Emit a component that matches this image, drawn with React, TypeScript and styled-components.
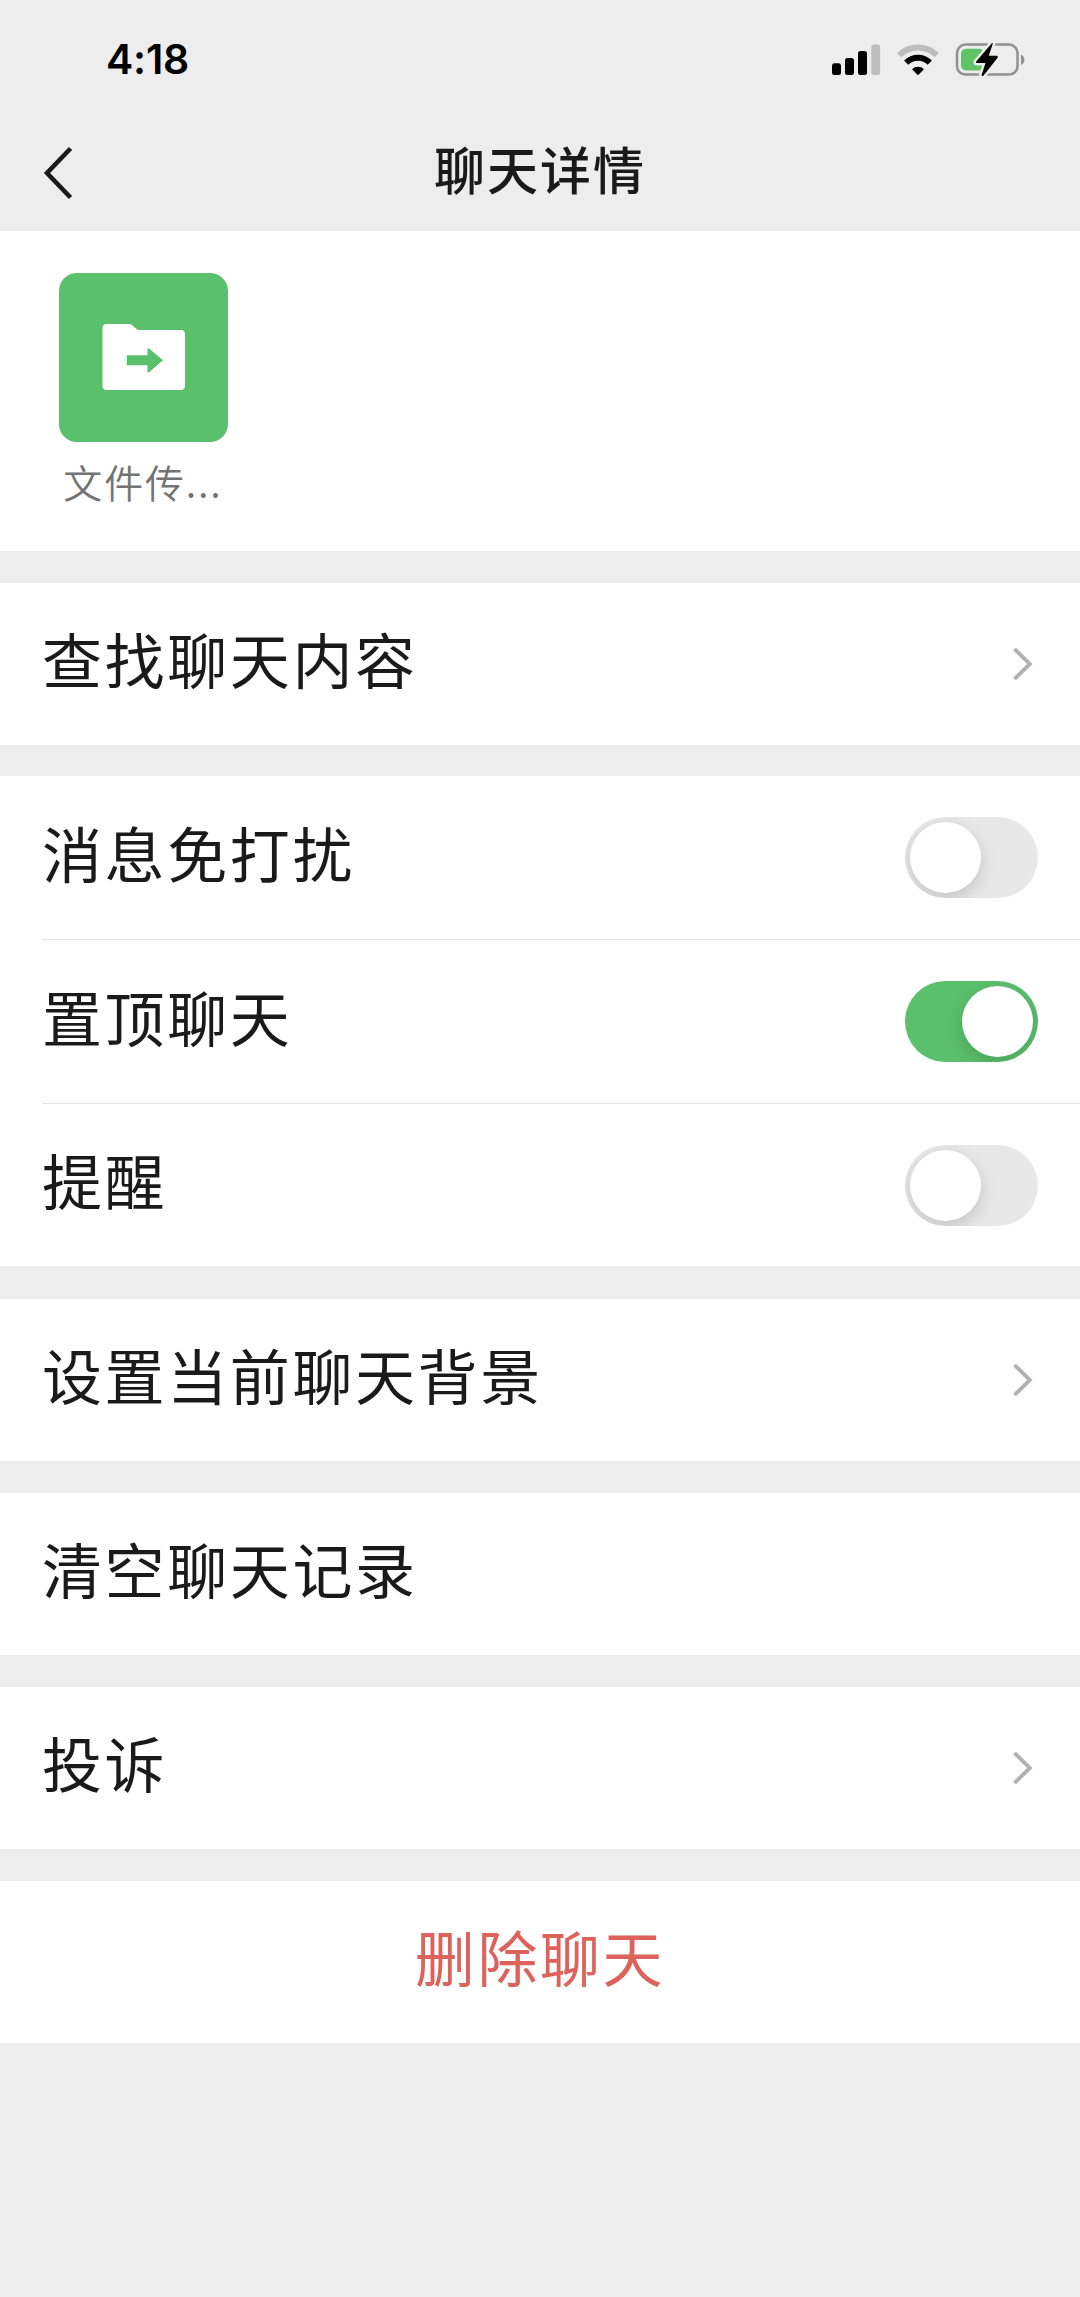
import React from "react";
import styled, { createGlobalStyle } from "styled-components";

const GlobalStyle = createGlobalStyle`
  * { box-sizing: border-box; }
  body {
    margin: 0;
    background: #ededed;
    font-family: "Liberation Sans", "Noto Sans CJK SC", sans-serif;
    color: #1a1a1a;
  }
`;

const Screen = styled.main`
  display: flex;
  flex-direction: column;
  width: 1080px;
  height: 2297px;
  background: #ededed;
  overflow: hidden;
`;

const StatusBar = styled.div`
  display: flex;
  justify-content: space-between;
  align-items: center;
  height: 118px;
  padding: 0 55px 0 106px;
`;

const Time = styled.span`
  font-family: Inter, sans-serif;
  font-size: 41px;
  font-weight: 600;
  letter-spacing: -0.2px;
  color: #000;
`;

const StatusIcons = styled.div`
  display: flex;
  align-items: center;
  gap: 16px;
`;

const NavBar = styled.header`
  display: grid;
  grid-template-columns: 120px 1fr 120px;
  align-items: center;
  height: 113px;
`;

const BackButton = styled.button`
  display: flex;
  padding: 0 0 3px 42px;
  border: 0;
  background: none;
`;

const Title = styled.h1`
  margin: 0;
  padding-bottom: 4px;
  text-align: center;
  font-size: 51px;
  line-height: 70px;
  font-weight: 500;
  letter-spacing: 2px;
`;

const Members = styled.section`
  display: flex;
  height: 320px;
  padding: 42px 58px;
  background: #fff;
`;

const Member = styled.div`
  display: flex;
  flex-direction: column;
  align-items: center;
  width: 170px;
`;

const Avatar = styled.div`
  display: flex;
  width: 169px;
  height: 169px;
  border-radius: 18px;
  background: #5ac06c;
`;

const MemberName = styled.span`
  margin-top: 10px;
  font-size: 39px;
  line-height: 58px;
  letter-spacing: 1.8px;
  color: #737373;
  font-family: "Noto Sans CJK SC", sans-serif;
  font-weight: 350;
  white-space: nowrap;
`;

const Group = styled.section<{ $gap?: number }>`
  display: flex;
  flex-direction: column;
  margin-top: ${(p) => p.$gap ?? 32}px;
  background: #fff;
`;

const Row = styled.div<{ $divided?: boolean; $center?: boolean }>`
  display: flex;
  align-items: center;
  justify-content: ${(p) => (p.$center ? "center" : "space-between")};
  height: ${(p) => (p.$divided ? 164 : 162)}px;
  margin-left: ${(p) => (p.$center ? 0 : 42)}px;
  padding-right: ${(p) => (p.$center ? 0 : 42)}px;
  border-bottom: ${(p) => (p.$divided ? "1px solid #e3e3e3" : "0")};
`;

const Label = styled.span<{ $danger?: boolean }>`
  font-size: 60px;
  line-height: 80px;
  letter-spacing: 2.6px;
  color: ${(p) => (p.$danger ? "#dc625b" : "#1a1a1a")};
`;

const Track = styled.span<{ $on: boolean }>`
  display: flex;
  justify-content: ${(p) => (p.$on ? "flex-end" : "flex-start")};
  align-items: center;
  width: 133px;
  height: 81px;
  padding: 5px;
  border-radius: 41px;
  overflow: hidden;
  background: ${(p) => (p.$on ? "#5ac06c" : "#e8e8e8")};
`;

const Knob = styled.span`
  width: 71px;
  height: 71px;
  border-radius: 50%;
  background: #fff;
  box-shadow: 0 6px 18px rgba(0, 0, 0, 0.16);
`;

const ChevronBox = styled.svg`
  margin-right: 3px;
`;

const Chevron = () => (
  <ChevronBox width="24" height="38" viewBox="0 0 24 38" fill="none">
    <path d="M3.5 4 L18.8 19 L3.5 34" stroke="#b0b0b0" strokeWidth="3.8" />
  </ChevronBox>
);

const Switch = ({ on = false }: { on?: boolean }) => (
  <Track $on={on} role="switch" aria-checked={on}>
    <Knob />
  </Track>
);

const Signal = () => (
  <svg width="49" height="36" viewBox="0 0 49 36">
    <rect x="0" y="22.3" width="9" height="11.7" rx="2.5" />
    <rect x="13" y="17" width="9" height="17" rx="2.5" />
    <rect x="26" y="10" width="9" height="24" rx="2.5" />
    <rect x="39.3" y="3.5" width="8.8" height="30.5" rx="2.5" fill="#bdbdbd" />
  </svg>
);

const Wifi = () => (
  <svg width="42" height="36" viewBox="0 0 42 36" fill="none">
    <path d="M2.2 14.2 A27 27 0 0 1 39.8 14.2" stroke="#bdbdbd" strokeWidth="6" />
    <path d="M9.2 21.6 A17 17 0 0 1 32.8 21.6" stroke="#000" strokeWidth="6" />
    <path d="M15 28.2 A8.7 8.7 0 0 1 27 28.2 L21 34.2 Z" fill="#000" />
  </svg>
);

const Battery = () => (
  <svg width="70" height="36" viewBox="0 0 70 36">
    <rect x="2" y="3.6" width="60.5" height="30" rx="8.5" fill="none" stroke="#919191" strokeWidth="2.5" />
    <path d="M66 13.4 Q69.4 15 69.4 18.7 Q69.4 22.4 66 24 Z" fill="#919191" />
    <rect x="6" y="7.8" width="23" height="21.6" rx="5" fill="#5fc466" />
    <path
      d="M37 2 L21 20.8 Q20.6 22 22 22 L30.5 22 L26.6 34 Q27 35.6 28.6 34.4 L42.8 16.4 Q43 15 41.8 14.8 L33.8 14.8 L37.8 2.8 Q37.8 1.6 37 2 Z"
      stroke="#ededed"
      strokeWidth="5"
      paintOrder="stroke"
      fill="#000"
    />
  </svg>
);

const FolderIcon = () => (
  <svg width="169" height="169" viewBox="0 0 169 169">
    <path
      d="M47.5 51 H70 Q72 51 73.5 52.4 L79 57 H122 Q126 57 126 61 V113 Q126 117 122 117 H47.5 Q43.5 117 43.5 113 V55 Q43.5 51 47.5 51 Z"
      fill="#fff"
    />
    <path d="M67.8 82.3 H88.5 V75.5 Q89.5 75 90.6 76 L104 87.3 L90.6 98.8 Q89.5 99.8 88.5 99.3 V92.2 H67.8 Z" fill="#5ac06c" />
  </svg>
);

export default function App() {
  return (
    <>
      <GlobalStyle />
      <Screen>
        <StatusBar>
          <Time>4:18</Time>
          <StatusIcons>
            <Signal />
            <Wifi />
            <Battery />
          </StatusIcons>
        </StatusBar>
        <NavBar>
          <BackButton aria-label="返回">
            <svg width="34" height="56" viewBox="0 0 34 56" fill="none">
              <path d="M28.5 3.5 L5 28 L28.5 52.5" stroke="#1a1a1a" strokeWidth="4.6" />
            </svg>
          </BackButton>
          <Title>聊天详情</Title>
        </NavBar>
        <Members>
          <Member>
            <Avatar>
              <FolderIcon />
            </Avatar>
            <MemberName>文件传...</MemberName>
          </Member>
        </Members>
        <Group>
          <Row>
            <Label>查找聊天内容</Label>
            <Chevron />
          </Row>
        </Group>
        <Group $gap={31}>
          <Row $divided>
            <Label>消息免打扰</Label>
            <Switch />
          </Row>
          <Row $divided>
            <Label>置顶聊天</Label>
            <Switch on />
          </Row>
          <Row>
            <Label>提醒</Label>
            <Switch />
          </Row>
        </Group>
        <Group $gap={33}>
          <Row>
            <Label>设置当前聊天背景</Label>
            <Chevron />
          </Row>
        </Group>
        <Group>
          <Row>
            <Label>清空聊天记录</Label>
          </Row>
        </Group>
        <Group>
          <Row>
            <Label>投诉</Label>
            <Chevron />
          </Row>
        </Group>
        <Group>
          <Row $center>
            <Label $danger>删除聊天</Label>
          </Row>
        </Group>
      </Screen>
    </>
  );
}
